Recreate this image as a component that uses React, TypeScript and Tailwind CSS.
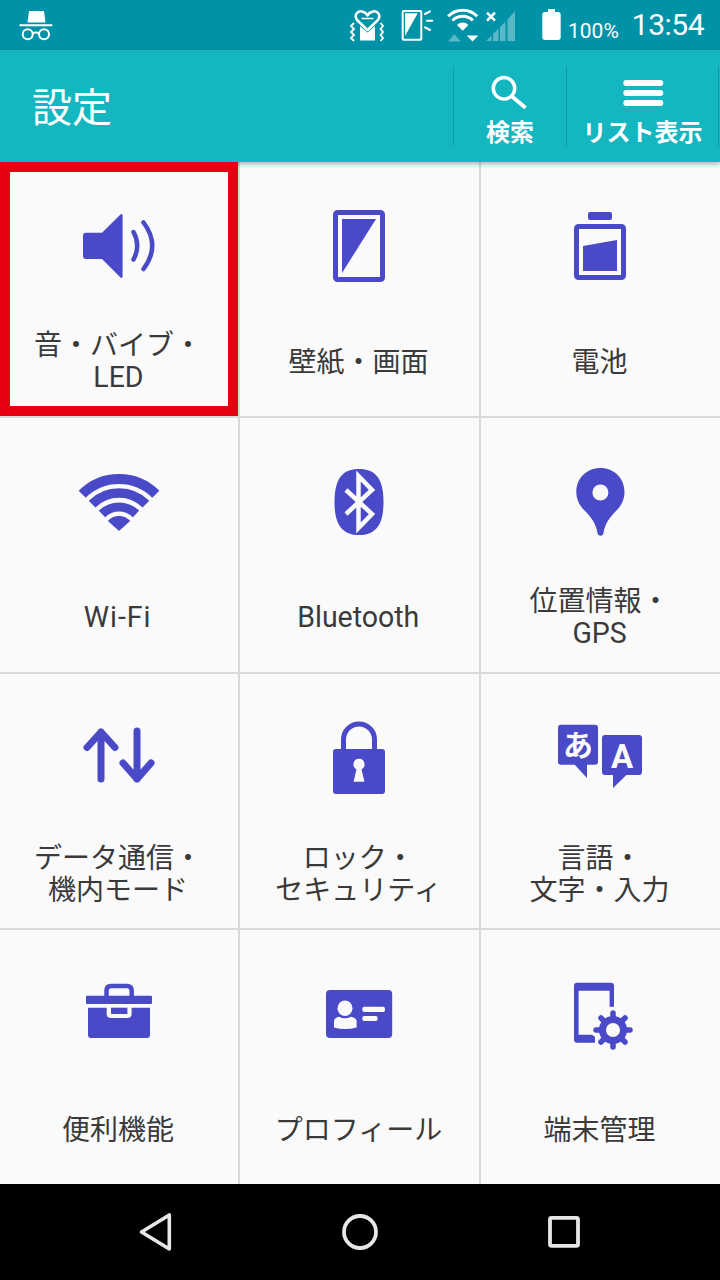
import type { ReactNode } from "react";

const BLUE = "#4a4ac8";

function Latin({ children }: { children: ReactNode }) {
  return (
    <span className="inline-block origin-center scale-x-[0.95] font-['Roboto',sans-serif] text-[30px]">
      {children}
    </span>
  );
}

function Icon({ box, children }: { box: string; children: ReactNode }) {
  return (
    <svg className="mx-auto block h-[100px] w-[100px]" viewBox={box} fill={BLUE}>
      {children}
    </svg>
  );
}

const items: { icon: ReactNode; lines: ReactNode[] }[] = [
  {
    lines: ["音・バイブ・", <Latin>LED</Latin>],
    icon: (
      <Icon box="69 196 100 100">
        <path d="M86 232.700H102L120.500 214.500Q122.600 213 122.600 216V276Q122.600 279 120.500 277.500L102 259H86Q83 259 83 256V235.700Q83 232.700 86 232.700Z" />
        <path d="M133.500 232Q141 245.500 133.500 259.500M143.500 222.500Q161 245.500 143.500 269" fill="none" stroke={BLUE} strokeWidth="4.500" strokeLinecap="round" />
      </Icon>
    ),
  },
  {
    lines: ["壁紙・画面"],
    icon: (
      <Icon box="310 196 100 100">
        <rect x="335.500" y="212.500" width="47" height="67" rx="2" fill="none" stroke={BLUE} strokeWidth="5" />
        <path d="M342 219H376L342 273Z" />
      </Icon>
    ),
  },
  {
    lines: ["電池"],
    icon: (
      <Icon box="551 196 100 100">
        <rect x="588" y="212" width="24" height="8" rx="2" />
        <rect x="576.500" y="226.500" width="47" height="51" rx="2" fill="none" stroke={BLUE} strokeWidth="5" />
        <path d="M583 246L617 240V271H583Z" />
      </Icon>
    ),
  },
  {
    lines: [<Latin><span className="tracking-[1px]">Wi-Fi</span></Latin>],
    icon: (
      <Icon box="69 452 100 100">
        <g fill="none" stroke={BLUE} strokeLinejoin="round">
          <path d="M82.200 494.200A52 52 0 0 1 155.800 494.200" strokeWidth="10" />
          <path d="M92.100 504.100A38 38 0 0 1 145.900 504.100" strokeWidth="9.500" />
          <path d="M102 514A24 24 0 0 1 136 514" strokeWidth="9" />
        </g>
        <path d="M119 530L108.900 520.900A14.300 14.300 0 0 1 129.100 520.900Z" stroke={BLUE} strokeWidth="1.500" strokeLinejoin="round" />
      </Icon>
    ),
  },
  {
    lines: [<Latin>Bluetooth</Latin>],
    icon: (
      <Icon box="310 452 100 100">
        <path d="M359 469C375 469 383.500 478 383.500 502C383.500 526 375 535 359 535C343 535 334.500 526 334.500 502C334.500 478 343 469 359 469Z" />
        <path d="M346 490L372 514L358.500 528V476L372 490L346 514" fill="none" stroke="#fafafa" strokeWidth="4.500" />
      </Icon>
    ),
  },
  {
    lines: ["位置情報・", <Latin>GPS</Latin>],
    icon: (
      <Icon box="551 452 100 100">
        <path
          fillRule="evenodd"
          d="M600.400 468C614 468 624.500 478 624.500 492C624.500 500 621 506 616 511C609 518 605 524 603.500 533C603 536.500 598 536.500 597.500 533C596 524 592 518 585 511C580 506 576.300 500 576.300 492C576.300 478 587 468 600.400 468ZM600.400 484.500A8 8 0 1 0 600.400 500.500A8 8 0 1 0 600.400 484.500Z"
        />
      </Icon>
    ),
  },
  {
    lines: ["データ通信・", "機内モード"],
    icon: (
      <Icon box="69 708 100 100">
        <path d="M101 779V732M87 747.500L101 732L115 747.500M137 731V779M123 763L137 779L151 763" fill="none" stroke={BLUE} strokeWidth="7" strokeLinecap="round" strokeLinejoin="round" />
      </Icon>
    ),
  },
  {
    lines: ["ロック・", "セキュリティ"],
    icon: (
      <Icon box="310 708 100 100">
        <path d="M343.500 750V739.500A15.500 15.500 0 0 1 374.500 739.500V750" fill="none" stroke={BLUE} strokeWidth="5" />
        <path
          fillRule="evenodd"
          d="M336 749H382A3 3 0 0 1 385 752V791A3 3 0 0 1 382 794H336A3 3 0 0 1 333 791V752A3 3 0 0 1 336 749ZM359 758.800A5.500 5.500 0 0 0 356.500 769.200L353.600 781.700H364.400L361.500 769.200A5.500 5.500 0 0 0 359 758.800Z"
        />
      </Icon>
    ),
  },
  {
    lines: ["言語・", "文字・入力"],
    icon: (
      <Icon box="551 708 100 100">
        <path d="M561 724.700H595A3 3 0 0 1 598 727.700V761.700A3 3 0 0 1 595 764.700H587V778L574.700 764.700H561A3 3 0 0 1 558 761.700V727.700A3 3 0 0 1 561 724.700Z" />
        <path d="M605 735H639A3 3 0 0 1 642 738V772A3 3 0 0 1 639 775H626.400L613 788V775H605A3 3 0 0 1 602 772V738A3 3 0 0 1 605 735Z" />
        <text x="578" y="756" textAnchor="middle" fontSize="30" fontWeight="700" fill="#fafafa">あ</text>
        <text x="622" y="768" textAnchor="middle" fontSize="33" fontWeight="700" fill="#fafafa" fontFamily="Roboto, sans-serif">A</text>
      </Icon>
    ),
  },
  {
    lines: ["便利機能"],
    icon: (
      <Icon box="69 964 100 100">
        <path d="M106.500 996V991Q106.500 986 111 986H127Q131.700 986 131.700 991V996" fill="none" stroke={BLUE} strokeWidth="4.500" />
        <rect x="86" y="995.700" width="66" height="8.300" rx="1" />
        <path d="M88 1007.700H106.700V1014Q106.700 1018 111 1018H127.400Q131.600 1018 131.600 1014V1007.700H150V1035Q150 1038 147 1038H91Q88 1038 88 1035Z" />
        <rect x="111" y="1007.700" width="16.400" height="6.300" />
      </Icon>
    ),
  },
  {
    lines: ["プロフィール"],
    icon: (
      <Icon box="310 964 100 100">
        <rect x="326" y="990" width="66.200" height="48" rx="4" />
        <ellipse cx="345" cy="1008.300" rx="7.500" ry="7.800" fill="#fafafa" />
        <path d="M334 1021Q334 1018 339 1016.700Q345 1020 351 1016.700Q356.600 1018 356.600 1021V1027.500Q345 1030.500 334 1027.500Z" fill="#fafafa" />
        <rect x="362.300" y="1006.700" width="22.700" height="5.300" rx="2" fill="#fafafa" />
        <rect x="362.300" y="1016" width="15.300" height="5" rx="2" fill="#fafafa" />
      </Icon>
    ),
  },
  {
    lines: ["端末管理"],
    icon: (
      <Icon box="551 964 100 100">
        <path d="M577 982.700H611A3 3 0 0 1 614 985.700V1006.700H609.600V990.700H578.600V1034.700H592L595 1037V1042.700H577A3 3 0 0 1 574 1039.700V985.700A3 3 0 0 1 577 982.700Z" />
        <circle cx="613" cy="1030" r="10.500" fill="none" stroke={BLUE} strokeWidth="7" />
        {[0, 45, 90, 135, 180, 225, 270, 315].map((a) => (
          <line key={a} x1="613" y1="1018" x2="613" y2="1013" stroke={BLUE} strokeWidth="5.500" strokeLinecap="round" transform={`rotate(${a} 613 1030)`} />
        ))}
      </Icon>
    ),
  },
];

function StatusBar() {
  return (
    <div className="flex h-[50px] items-start bg-[#0092a7] text-white">
      <svg className="ml-[16px] h-[50px] w-[40px] shrink-0" viewBox="16 0 40 50" fill="white">
        <path d="M29 11H44L45.500 22.500H27.500Z" />
        <path d="M19.500 25.200H52.300" stroke="white" strokeWidth="2" />
        <circle cx="27.700" cy="34.300" r="5" fill="none" stroke="white" strokeWidth="2" />
        <circle cx="44" cy="34.300" r="5" fill="none" stroke="white" strokeWidth="2" />
        <path d="M32.700 33.500Q36 31.500 39 33.500" fill="none" stroke="white" strokeWidth="2" />
      </svg>
      <svg className="ml-[292px] h-[50px] w-[36px] shrink-0" viewBox="348 0 36 50">
        <path d="M367.500 30L357.500 20.500C353 15 358 10.500 362 11.500C364.500 12 366.500 13.500 367.500 15.500C368.500 13.500 370.500 12 373 11.500C377 10.500 382 15 377.500 20.500Z" fill="none" stroke="white" strokeWidth="2.500" strokeLinejoin="round" />
        <path d="M360 26L367.500 32.500L375 26V40.500H360Z" fill="white" />
        <path d="M361.500 18.500H373.500" stroke="white" strokeWidth="1.500" />
        <path d="M354 23L351 26L354 29L351 32L354 35L351 38L354 41M380.500 23L383 26L380.500 29L383 32L380.500 35L383 38L380.500 41" fill="none" stroke="white" strokeWidth="1.800" />
      </svg>
      <svg className="ml-[14px] h-[50px] w-[36px] shrink-0" viewBox="398 0 36 50">
        <rect x="402.700" y="11" width="18.600" height="28.700" rx="1" fill="none" stroke="white" strokeWidth="2" />
        <path d="M405 13.300H417.700L405 36Z" fill="white" />
        <path d="M425 14L430 11.300M427 20.700H432.300M425 27.300L430 30" stroke="white" strokeWidth="2" strokeLinecap="round" />
      </svg>
      <svg className="ml-[10px] h-[50px] w-[74px] shrink-0" viewBox="444 0 74 50" fill="white">
        <path d="M448.200 16.200A20.500 20.500 0 0 1 477.200 16.200M452.500 20.500A14.500 14.500 0 0 1 472.900 20.500" fill="none" stroke="white" strokeWidth="3" />
        <path d="M462.700 30.700L457 25A8 8 0 0 1 468.400 25Z" />
        <path d="M448 41.500L454.300 34.300L460.700 41.500Z" opacity="0.35" />
        <path d="M466.700 35.500H478.300L472.500 41.500Z" />
        <path d="M487 12.700L495 20.700M495 12.700L487 20.700" stroke="white" strokeWidth="2.500" fill="none" />
        <g opacity="0.35">
          <path d="M486 41L491.500 35.500V41Z" />
          <path d="M493 34V41H498.500V28.500Z" />
          <path d="M500 27V41H505.500V21.500Z" />
          <path d="M507.500 19.500V41H515V11Z" />
        </g>
      </svg>
      <svg className="ml-[20px] h-[50px] w-[26px] shrink-0" viewBox="538 0 26 50" fill="white">
        <path d="M548 9H555V12H558A2.700 2.700 0 0 1 560.700 14.700V37.300A2.700 2.700 0 0 1 558 40H545A2.700 2.700 0 0 1 542.300 37.300V14.700A2.700 2.700 0 0 1 545 12H548Z" />
      </svg>
      <span className="ml-[4px] mt-[21px] font-['Roboto',sans-serif] text-[21px] leading-[20px]">100%</span>
      <span className="ml-[13px] mt-[10px] font-['Roboto',sans-serif] text-[30px] leading-[30px] tracking-[-0.5px]">13:54</span>
    </div>
  );
}

function AppBar() {
  return (
    <div className="relative z-10 flex h-[112px] items-center bg-[#14b6c0] text-white shadow-[0_2px_5px_rgba(0,0,0,0.3)]">
      <h1 className="-mt-[3px] flex-1 pl-[32px] text-[40px] font-normal leading-none">設定</h1>
      <button className="flex h-[80px] w-[113px] flex-col items-center border-l border-[#0f9ca8]">
        <svg className="h-[51px] w-[60px]" viewBox="480 66 60 51">
          <circle cx="504" cy="88.300" r="10.700" fill="none" stroke="white" strokeWidth="3.500" />
          <path d="M512 96.500L525.500 107.800" stroke="white" strokeWidth="3.800" />
        </svg>
        <span className="text-[24px] font-bold leading-[28px]">検索</span>
      </button>
      <button className="mr-[1px] flex h-[80px] w-[153px] flex-col items-center border-x border-[#0f9ca8]">
        <svg className="h-[51px] w-[60px]" viewBox="613 66 60 51" fill="white">
          <rect x="623.300" y="80" width="40" height="6" rx="3" />
          <rect x="623.300" y="90" width="40" height="6" rx="3" />
          <rect x="623.300" y="100" width="40" height="6" rx="3" />
        </svg>
        <span className="whitespace-nowrap text-[24px] font-bold leading-[28px]">リスト表示</span>
      </button>
    </div>
  );
}

function NavBar() {
  return (
    <div className="flex h-[96px] items-center justify-center bg-black">
      <div className="w-[204px]">
        <svg className="mx-auto block h-[40px] w-[40px]" viewBox="136 1212 40 40">
          <path d="M141.500 1232L169.300 1215V1249Z" fill="none" stroke="#e6e6e6" strokeWidth="3.600" strokeLinejoin="round" />
        </svg>
      </div>
      <div className="w-[204px]">
        <svg className="mx-auto block h-[40px] w-[40px]" viewBox="340 1212 40 40">
          <circle cx="360" cy="1232" r="16" fill="none" stroke="#e6e6e6" strokeWidth="3.800" />
        </svg>
      </div>
      <div className="w-[204px]">
        <svg className="mx-auto block h-[40px] w-[40px]" viewBox="544 1212 40 40">
          <rect x="550" y="1217.800" width="28" height="28" rx="1.500" fill="none" stroke="#e6e6e6" strokeWidth="3.800" />
        </svg>
      </div>
    </div>
  );
}

export default function App() {
  return (
    <div className="h-[1280px] w-[720px] overflow-hidden font-['Noto_Sans_CJK_JP',sans-serif]">
      <StatusBar />
      <AppBar />
      <div className="grid grid-cols-[238px_239px_239px] grid-rows-[repeat(4,254px)] gap-[2px] bg-[#d8d8d8]">
        {items.map((item, i) => (
          <div key={i} className="relative bg-[#fafafa] pt-[34px] text-[#3a3a3a]">
            {item.icon}
            <div className="mt-[32px] flex h-[64px] flex-col items-center justify-center pr-[2px] text-[28px] leading-[32px]">
              {item.lines.map((line, j) => (
                <div key={j} className="whitespace-nowrap">
                  {line}
                </div>
              ))}
            </div>
            {i === 0 && <div className="absolute inset-0 z-20 border-[10px] border-[#e60012]" />}
          </div>
        ))}
      </div>
      <NavBar />
    </div>
  );
}
